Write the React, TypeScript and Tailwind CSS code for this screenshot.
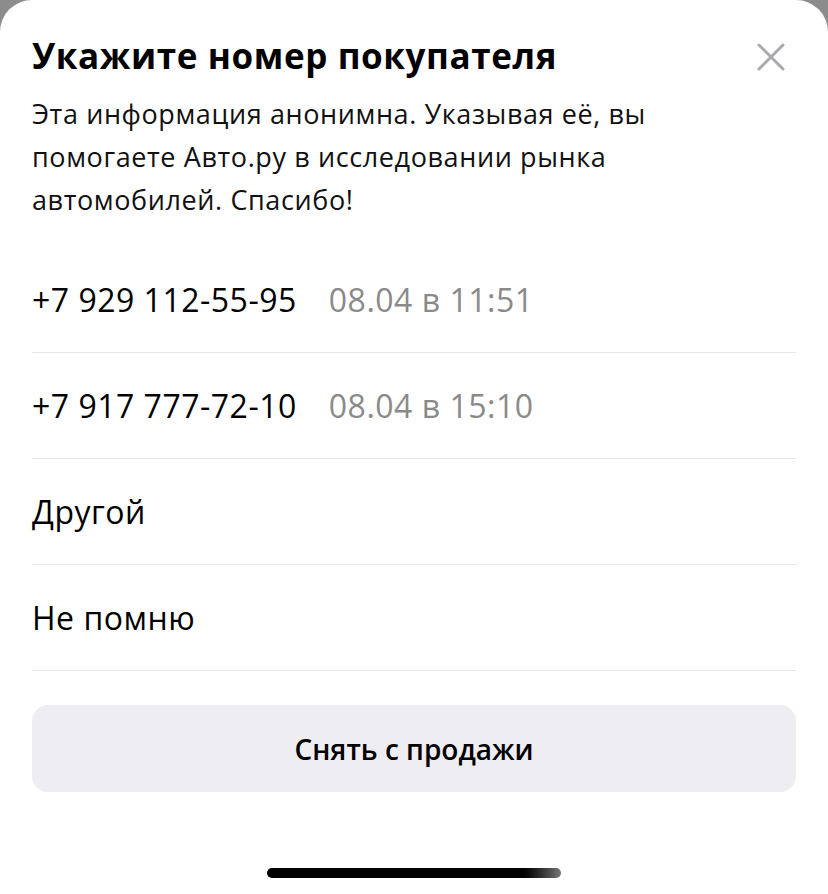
import React from "react";

const font = { fontFamily: '"Open Sans", "Noto Sans", sans-serif' };

const contacts = [
  { phone: "+7 929 112-55-95", date: "08.04 в 11:51" },
  { phone: "+7 917 777-72-10", date: "08.04 в 15:10" },
];

function CloseIcon() {
  return (
    <svg width="30" height="30" viewBox="0 0 30 30" fill="none">
      <path d="M3 3L27 27M27 3L3 27" stroke="#a9a9ae" strokeWidth="3" strokeLinecap="round" />
    </svg>
  );
}

export default function App() {
  return (
    <div className="h-[894px] w-[828px] bg-[#8c8c8c] overflow-hidden" style={font}>
      <div className="h-full bg-white rounded-t-[32px] flex flex-col px-8">
        <div className="flex items-start justify-between pt-[30px]">
          <h1 className="text-[35px] leading-[52px] font-bold text-black tracking-[0.6px]">
            Укажите номер покупателя
          </h1>
          <button className="mt-[12px] mr-[10px]" aria-label="Закрыть">
            <CloseIcon />
          </button>
        </div>
        <p className="text-[27px] leading-[43px] text-[#111] tracking-[0.6px] max-w-[700px] mt-[10px]">
          Эта информация анонимна. Указывая её, вы помогаете Авто.ру в исследовании рынка автомобилей. Спасибо!
        </p>

        <div className="mt-[26px] flex flex-col">
          {contacts.map((c) => (
            <div key={c.phone} className="h-[106px] flex items-center gap-8 border-b border-[#e6e6e6] text-[32px] tracking-[0.5px]">
              <span className="text-black">{c.phone}</span>
              <span className="text-[#8a8a8a]">{c.date}</span>
            </div>
          ))}
          <div className="h-[106px] flex items-center border-b border-[#e6e6e6] text-[32px] tracking-[0.5px] text-black">
            Другой
          </div>
          <div className="h-[106px] flex items-center border-b border-[#e6e6e6] text-[32px] tracking-[0.5px] text-black">
            Не помню
          </div>
        </div>

        <button className="mt-[34px] h-[87px] w-full rounded-[16px] bg-[#eeedf2] text-[28px] font-semibold text-black">
          Снять с продажи
        </button>

        <div className="mt-auto mb-[16px] flex justify-center">
          <div className="h-[10px] w-[294px] rounded-full bg-gradient-to-r from-black from-85% to-[#777]" />
        </div>
      </div>
    </div>
  );
}
